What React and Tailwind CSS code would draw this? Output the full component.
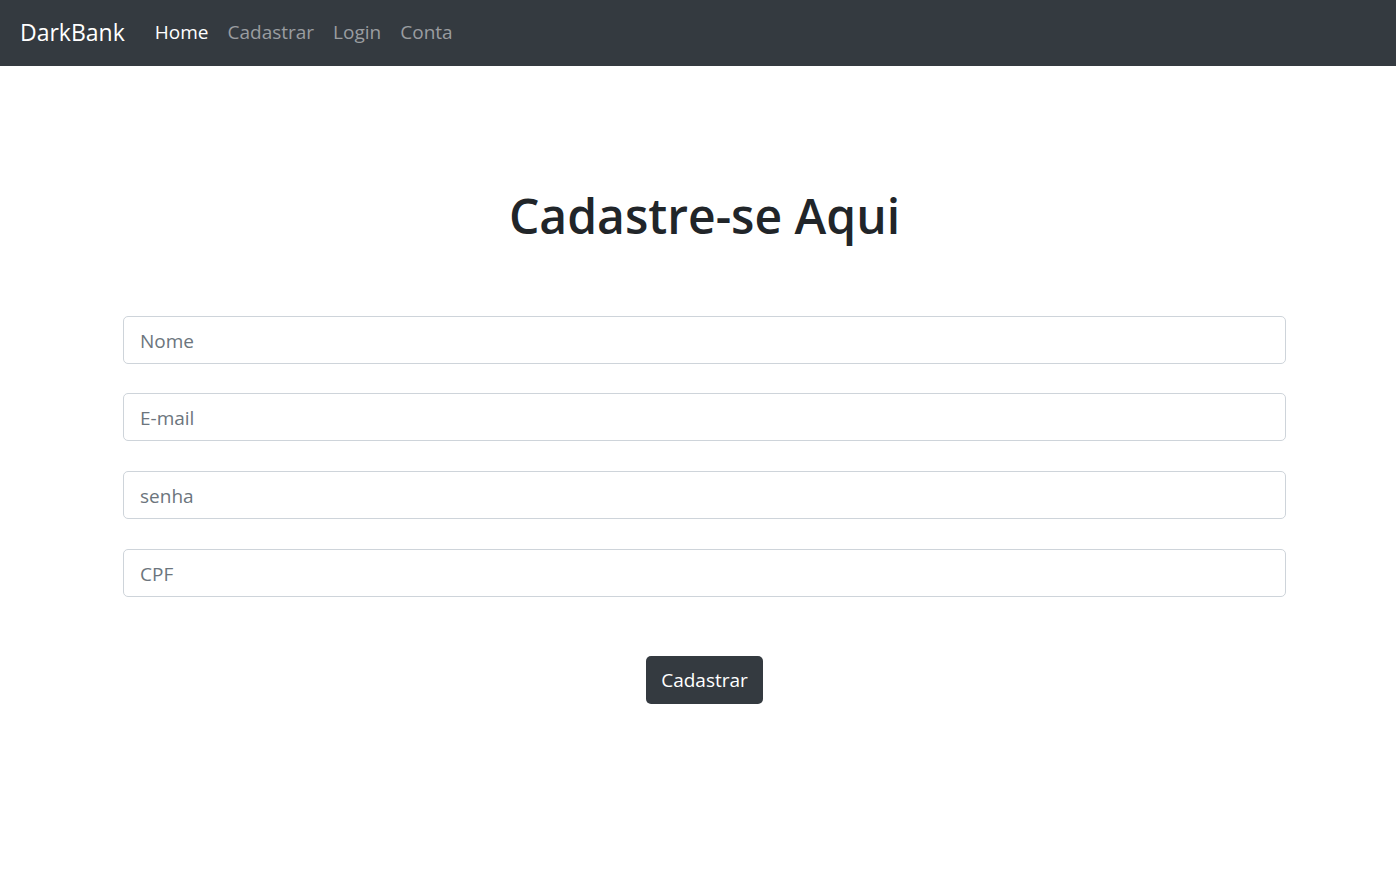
export default function App() {
  const font = { fontFamily: '"Open Sans", "Noto Sans", sans-serif' };
  const fields = ["Nome", "E-mail", "senha", "CPF"];
  return (
    <div className="min-h-[875px] bg-white" style={font}>
      <nav className="h-[66px] bg-[#343a40] flex items-center px-[20px] pb-[2px]">
        <span className="text-[23px] text-white mr-[30px] leading-none">DarkBank</span>
        <div className="flex items-center gap-[19px] text-[19px] leading-none">
          <span className="text-white">Home</span>
          <span className="text-[#9a9da0]">Cadastrar</span>
          <span className="text-[#9a9da0]">Login</span>
          <span className="text-[#9a9da0]">Conta</span>
        </div>
      </nav>
      <div className="pl-[123px] pr-[110px] pt-[121px]">
        <h1 className="text-center text-[48px] font-semibold text-[#212529] leading-[1.2] mb-[71px]">Cadastre-se Aqui</h1>
        <div className="flex flex-col gap-[29.7px]">
          {fields.map((f) => (
            <input
              key={f}
              placeholder={f}
              className="h-[48px] w-full border border-[#ced4da] rounded-[5px] px-[16px] pt-[2px] text-[19px] placeholder:text-[#6c757d] outline-none"
              style={font}
            />
          ))}
        </div>
        <div className="flex justify-center mt-[59px]">
          <button className="h-[48px] w-[117px] bg-[#343a40] text-white rounded-[5px] text-[19px] pt-[2px]" style={font}>Cadastrar</button>
        </div>
      </div>
    </div>
  );
}
